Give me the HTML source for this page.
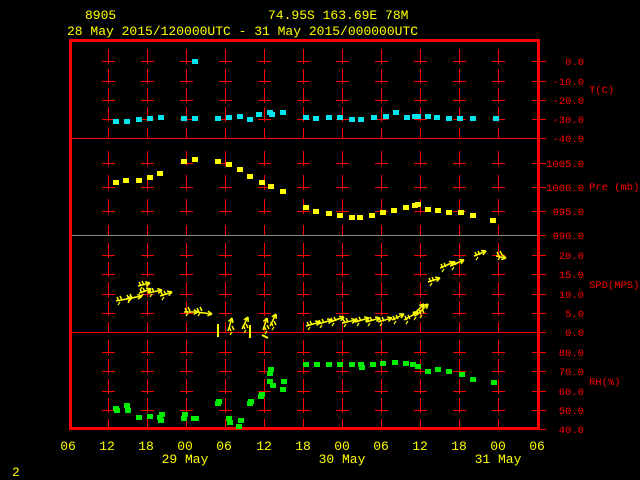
<!DOCTYPE html>
<html><head><meta charset="utf-8"><style>
html,body{margin:0;padding:0;background:#000;width:640px;height:480px;overflow:hidden}
svg{position:absolute;left:0;top:0}
text{font-family:"Liberation Mono",monospace}
.y{fill:#ffff00;font-size:13px}
.r{fill:#ff0000;font-size:10.5px}
</style></head><body>
<svg id="s" width="640" height="480" viewBox="0 0 640 480">
<text class="y" x="85" y="19">8905</text>
<text class="y" x="268" y="19">74.95S   163.69E    78M</text>
<text class="y" x="67" y="35">28 May 2015/120000UTC - 31 May 2015/000000UTC</text>
<g class="y" text-anchor="middle">
<text x="68" y="450">06</text><text x="107" y="450">12</text><text x="146" y="450">18</text><text x="185" y="450">00</text><text x="224" y="450">06</text><text x="264" y="450">12</text><text x="303" y="450">18</text><text x="342" y="450">00</text><text x="381" y="450">06</text><text x="420" y="450">12</text><text x="459" y="450">18</text><text x="498" y="450">00</text><text x="537" y="450">06</text>
<text x="185" y="463">29 May</text><text x="342" y="463">30 May</text><text x="498" y="463">31 May</text>
</g>
<text class="y" x="12" y="476">2</text>
<g class="r" text-anchor="end">
<text x="584" y="65">0.0</text><text x="584" y="85">-10.0</text><text x="584" y="104">-20.0</text><text x="584" y="123">-30.0</text><text x="584" y="142">-40.0</text>
<text x="584" y="167">1005.0</text><text x="584" y="191">1000.0</text><text x="584" y="215">995.0</text><text x="584" y="239">990.0</text>
<text x="584" y="259">20.0</text><text x="584" y="278">15.0</text><text x="584" y="298">10.0</text><text x="584" y="317">5.0</text><text x="584" y="336">0.0</text>
<text x="584" y="356">80.0</text><text x="584" y="375">70.0</text><text x="584" y="395">60.0</text><text x="584" y="414">50.0</text><text x="584" y="433">40.0</text>
</g>
<g class="r">
<text x="589" y="93">T(C)</text><text x="589" y="190">Pre (mb)</text><text x="589" y="288">SPD(MPS)</text><text x="589" y="385">RH(%)</text>
</g>
<g id="g"></g>
</svg>
<script>
var g=document.getElementById('g'),N='http://www.w3.org/2000/svg';
function el(t,a){var e=document.createElementNS(N,t);for(var k in a)e.setAttribute(k,a[k]);g.appendChild(e);return e}
function ln(x1,y1,x2,y2,c,w){el('line',{x1:x1,y1:y1,x2:x2,y2:y2,stroke:c||'#f00','stroke-width':w||1})}
var cols=[108,147,186,225,264,303,342,381,420,459,498];
var ticks=[61,81,100,119,163,187,211,255,274,294,313,352,371,391,410];
var edges=[138,235,332,429];
cols.forEach(function(x){ticks.forEach(function(y){ln(x+.5,y-12,x+.5,y+3);ln(x-6,y+.5,x+7,y+.5)});
 edges.forEach(function(y){ln(x+.5,y-10,x+.5,y)});});
[61,81,100,119,138,163,187,211,235,255,274,294,313,332,352,371,391,410,429].forEach(function(y){ln(532,y+.5,546,y+.5)});
ln(70,138.5,540,138.5);ln(70,235.5,540,235.5,'#888');ln(70,332.5,540,332.5);
el('rect',{x:70.5,y:40.5,width:468,height:388,fill:'none',stroke:'#f00','stroke-width':3});
function pts(a,c,o){o=o||0;for(var i=0;i<a.length;i+=2)el('rect',{x:a[i]-3,y:a[i+1]-3+(a[i+1]>70?o:0),width:6,height:5,fill:c})}
pts([116,119,127,119,139,117,150,116,161,115,184,116,195,116,218,116,229,115,240,114,250,117,259,112,270,110,272,112,283,110,306,115,316,116,329,115,340,115,352,117,361,117,374,115,386,114,396,110,407,115,415,114,418,114,428,114,437,115,449,116,460,116,473,116,496,116,195,62],'#00e5ee',3);
pts([116,183,126,181,139,181,150,178,160,174,184,162,195,160,218,162,229,165,240,170,250,177,262,183,271,187,283,192,306,208,316,212,329,214,340,216,352,218,360,218,372,216,383,213,394,211,406,208,415,206,418,205,428,210,438,211,449,213,461,213,473,216,493,221],'#ffff00');
pts([116,409,117,411,127,406,128,411,139,418,150,417,160,418,161,421,162,415,184,419,185,415,194,419,196,419,218,404,219,402,229,419,230,423,239,427,241,421,250,404,251,402,261,397,262,395,270,374,271,370,270,382,273,386,283,390,284,382,306,365,317,365,329,365,340,365,352,365,361,365,362,368,373,365,383,364,395,363,406,364,413,365,418,367,428,372,438,370,449,372,462,375,473,380,494,383],'#00ee00');
function barb(x,y,dx,dy){ln(x,y,x+dx,y+dy,'#ff0',1.5);var a=Math.atan2(dy,dx);
 ln(x+dx,y+dy,x+dx-5*Math.cos(a-.5),y+dy-5*Math.sin(a-.5),'#ff0',1.5);ln(x+dx,y+dy,x+dx-5*Math.cos(a+.5),y+dy-5*Math.sin(a+.5),'#ff0',1.5);
 ln(x+3,y,x+1,y-4,'#ff0',1.5);ln(x+6,y-1,x+4,y-5,'#ff0',1.5);ln(x+4,y+1,x+2,y+4,'#ff0',1.2);}
[[116,301,16,-3],[126,299,16,-3],[139,293,12,-4],[148,293,14,-3],[160,296,12,-4],[138,286,12,-3],[184,312,14,0],[196,312,16,2],[228,331,4,-13],[242,329,6,-12],[263,330,4,-12],[270,326,6,-12],[306,326,14,-4],[318,324,14,-4],[330,322,14,-5],[342,323,14,-3],[355,322,14,-4],[366,322,14,-4],[378,322,14,-4],[392,320,12,-6],[404,320,14,-8],[412,316,12,-12],[418,314,10,-10],[428,282,12,-4],[440,268,14,-6],[450,266,14,-6],[474,256,12,-5],[496,256,10,2]].forEach(function(b){barb(b[0],b[1],b[2],b[3])});
ln(218,324,218,337,'#ff0',2);ln(250,325,250,338,'#ff0',2);ln(262,335,268,338,'#ff0',2);
</script>
</body></html>
